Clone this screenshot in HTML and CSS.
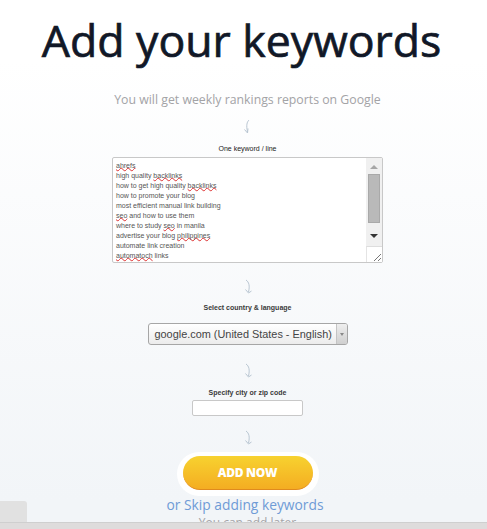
FILE: index.html
```html
<!DOCTYPE html>
<html lang="en">
<head>
    <meta charset="UTF-8">
    <meta name="viewport" content="width=device-width, initial-scale=1.0">
    <title>Add your keywords</title>
    <link rel="stylesheet" href="styles.css">
</head>
<body>

    <h1 class="title">Add your keywords</h1>
    <p class="subtitle">You will get weekly rankings reports on Google</p>

    <!-- keywords -->
    <svg class="arrow arrow-first" width="12" height="16" viewBox="0 0 12 16"><path d="M7 1C5 3 4 6 5.500 13M2.500 10.500L5.500 14L6 9.500"/></svg>
    <div class="label label-keywords">One keyword / line</div>
    <div class="keywords">
        <div class="keyword-list">
            <div><span class="typo">ahrefs</span></div>
            <div>high quality <span class="typo">backlinks</span></div>
            <div>how to get high quality <span class="typo">backlinks</span></div>
            <div>how to promote your blog</div>
            <div>most efficient manual link building</div>
            <div><span class="typo">seo</span> and how to use them</div>
            <div>where to study <span class="typo">seo</span> in manila</div>
            <div>advertise your blog <span class="typo">philippines</span></div>
            <div>automate link creation</div>
            <div><span class="typo">automatoch</span> links</div>
        </div>
        <div class="scroll-side">
            <div class="scrollbar">
                <div class="scroll-up"></div>
                <div class="scroll-thumb"></div>
                <div class="scroll-down"></div>
            </div>
            <div class="resizer">
                <svg width="9" height="9" viewBox="0 0 9 9"><path d="M1 8L8 1M5 8L8 5"/></svg>
            </div>
        </div>
    </div>

    <!-- country -->
    <svg class="arrow arrow-second" width="12" height="16" viewBox="0 0 12 16"><path d="M4 1C7 3 8 7 6.500 13M3.500 10.500L6.500 14L9.500 12"/></svg>
    <div class="label label-country">Select country &amp; language</div>
    <div class="select-box">
        <div class="select-text">google.com (United States - English)</div>
        <div class="select-btn"></div>
    </div>

    <!-- city -->
    <svg class="arrow arrow-third" width="12" height="16" viewBox="0 0 12 16"><path d="M4 1C7 3 8 7 6.500 13M3.500 10.500L6.500 14L9.500 12"/></svg>
    <div class="label label-city">Specify city or zip code</div>
    <input class="city-input" type="text">

    <svg class="arrow arrow-fourth" width="12" height="16" viewBox="0 0 12 16"><path d="M4 1C7 3 8 7 6.500 13M3.500 10.500L6.500 14L9.500 12"/></svg>

    <div class="btn-wrap"><button class="btn-add">ADD NOW</button></div>
    <a class="skip" href="#">or Skip adding keywords</a>
    <div class="later">You can add later</div>

    <div class="side-tab"></div>
    <div class="bottom-bar"></div>

</body>
</html>
```

FILE: styles.css
```css
html, body { margin: 0; height: 529px; overflow: hidden; }
body { position: relative; display: flex; flex-direction: column; align-items: center; padding-left: 8px; box-sizing: border-box; font-family: "Liberation Sans", Arial, sans-serif; background: linear-gradient(#ffffff 0, #ffffff 60px, #f2f5f8 500px); }

.title { margin: 7px 0 0 -12px; font-family: "Open Sans", sans-serif; font-size: 44.600px; line-height: 65px; font-weight: 400; color: #111827; white-space: nowrap; -webkit-text-stroke: 0.7px #111827; }
.subtitle { margin: 19px 0 0; font-family: "Open Sans", sans-serif; font-size: 12.300px; line-height: 18px; color: #a3a3a6; white-space: nowrap; }

.arrow { display: block; flex: none; }
.arrow path { fill: none; stroke: #b9c6d2; stroke-width: 1; }
.arrow-first { margin: 10px 0 0 0; }
.arrow-second { margin: 16px 0 0 0; }
.arrow-third { margin: 18px 0 0 0; }
.arrow-fourth { margin: 14px 0 0 0; }

.label { font-size: 7px; line-height: 9px; color: #222; white-space: nowrap; }
.label-keywords { margin-top: 9px; }
.label-country { margin-top: 8px; font-weight: bold; color: #3a3a3a; }
.label-city { margin-top: 9px; font-weight: bold; color: #3a3a3a; }

.keywords { display: flex; flex: none; width: 269px; height: 104px; margin-top: 4px; background: #fff; border: 1px solid #c8c8c8; border-radius: 2px; }
.keyword-list { flex: 1; padding: 3px 3px; font-size: 7px; line-height: 10px; color: #555; white-space: nowrap; }
.typo { text-decoration: underline wavy #d33; text-decoration-thickness: 0.7px; text-decoration-skip-ink: none; text-underline-offset: -1px; }

.scroll-side { display: flex; flex-direction: column; width: 16px; }
.scrollbar { flex: 1; display: flex; flex-direction: column; align-items: center; padding: 7px 2px 8px; background: #f0f0f0; }
.scroll-up { width: 0; height: 0; border-left: 4px solid transparent; border-right: 4px solid transparent; border-bottom: 4px solid #a6a6a6; }
.scroll-thumb { align-self: stretch; height: 47px; margin-top: 5px; background: #b9b9b9; border: 1px solid #a9a9a9; }
.scroll-down { width: 0; height: 0; margin-top: auto; border-left: 4px solid transparent; border-right: 4px solid transparent; border-top: 4px solid #333; }
.resizer { display: flex; justify-content: flex-end; align-items: flex-end; height: 16px; background: #fff; border-left: 1px solid #e4e4e4; border-top: 1px solid #ddd; box-sizing: border-box; }
.resizer svg { display: block; }
.resizer path { fill: none; stroke: #777; stroke-width: 1; }

.select-box { display: flex; flex: none; box-sizing: border-box; width: 200px; height: 22px; margin-top: 11px; border: 1px solid #a6a6a6; border-radius: 3px; background: linear-gradient(#ffffff, #ececec); }
.select-text { flex: 1; padding-left: 6px; font-size: 10.900px; line-height: 20px; color: #444; white-space: nowrap; }
.select-btn { position: relative; flex: none; width: 10px; border-left: 1px solid #c4c4c4; background: linear-gradient(#eeeeee, #cfcfcf); border-radius: 0 2px 2px 0; }
.select-btn::after { content: ""; position: absolute; left: 3px; top: 9px; border-left: 2px solid transparent; border-right: 2px solid transparent; border-top: 3px solid #888; }

.city-input { display: block; flex: none; box-sizing: border-box; width: 111px; height: 16px; margin-top: 3px; padding: 0; background: #fff; border: 1px solid #c8c8c8; border-radius: 2px; }

.btn-wrap { flex: none; margin-top: 6px; padding: 4px 6px 6px; background: #fff; border-radius: 22px; }
.btn-add { display: block; width: 130px; height: 34px; padding: 0; border: none; border-bottom: 1px solid #e08a1e; border-radius: 17px; background: linear-gradient(#f7d22f, #f4ad22); font-family: "Open Sans", sans-serif; font-size: 12px; font-weight: 800; letter-spacing: -0.3px; color: #fff; }

.skip { margin: -1px 0 0 -5px; font-family: "Open Sans", sans-serif; font-size: 13.800px; line-height: 20px; color: #6f9bd6; text-decoration: none; white-space: nowrap; }
.later { margin-top: -1px; font-family: "Open Sans", sans-serif; font-size: 12px; line-height: 18px; color: #a3a3a6; white-space: nowrap; }

.side-tab { position: absolute; left: 0; top: 501px; width: 27px; height: 21px; background: #e1e1e1; border-radius: 0 3px 0 0; }
.bottom-bar { position: absolute; left: 0; right: 0; top: 522px; height: 7px; background: #dedcdc; border-top: 1px solid #cfcfcf; box-sizing: border-box; }
```
